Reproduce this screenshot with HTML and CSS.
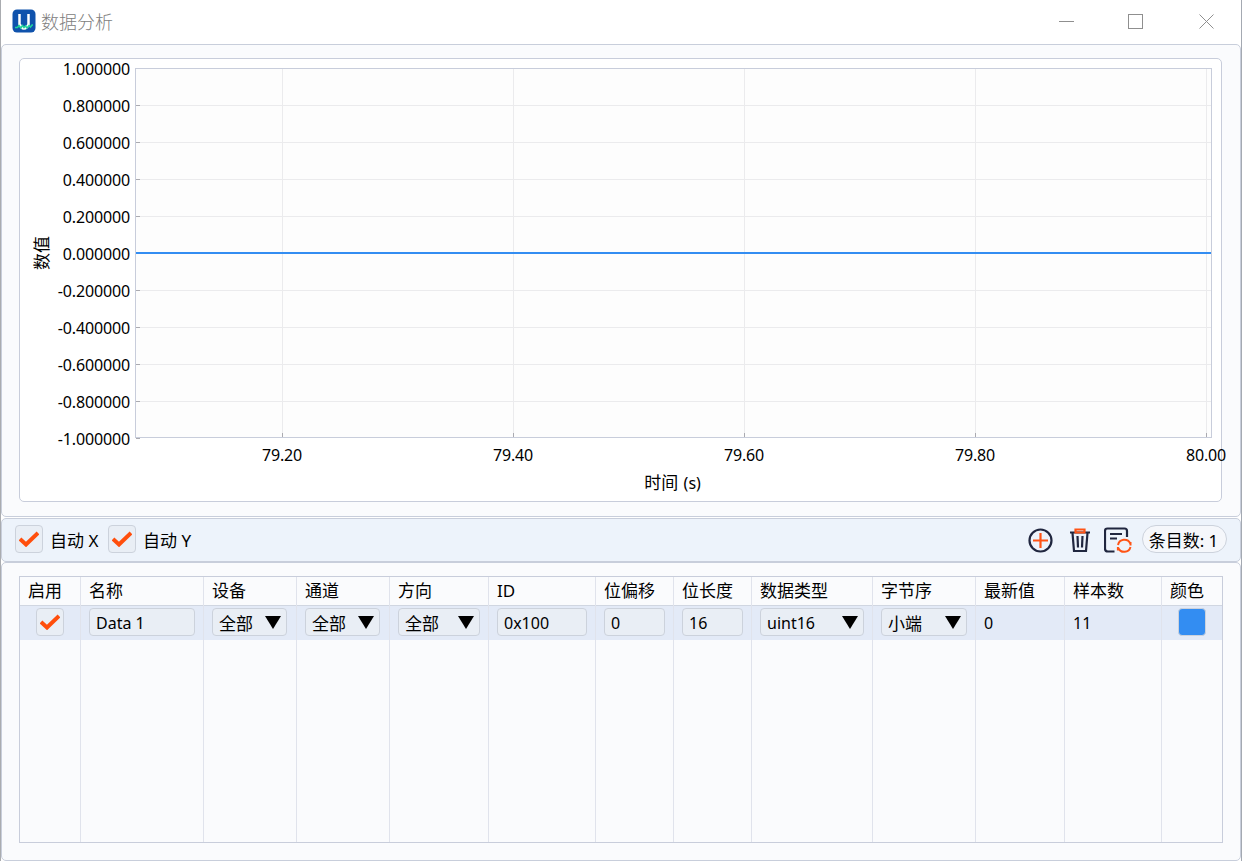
FILE: index.html
```
<!DOCTYPE html>
<html lang="zh-CN">
<head>
  <meta charset="UTF-8">
  <title>数据分析</title>
  <link rel="stylesheet" href="styles.css">
</head>
<body>
  <div class="window">
    <header class="titlebar">
      <svg class="logo" width="24" height="24" viewBox="0 0 24 24">
        <rect x="0.5" y="0.5" width="23" height="23" rx="4.5" fill="#0f52ac"/>
        <path d="M7.500 5v11M16.500 5v11M8 15.500q1 4 4 4t4.500-4" fill="none" stroke="#fff" stroke-width="2.500"/>
        <path d="M3 18.500h2.500l1.500-2 2 2.500 1.500-2.500 1.500 2 1.500-1.500 1.500 2 2-2.500 1.500 1.500 1.500-2h1" fill="none" stroke="#1fd49a" stroke-width="1.500"/>
      </svg>
      <h1>数据分析</h1>
      <svg class="controls" width="160" height="20" viewBox="1057 12 160 20" shape-rendering="crispEdges">
        <path d="M1059 21.5h15" />
        <rect x="1128.500" y="14.500" width="14" height="14"/>
        <path d="M1199.500 14.500l14 14M1213.500 14.500l-14 14" shape-rendering="auto"/>
      </svg>
    </header>

    <section class="panel chart-panel">
      <div class="chart">
        <svg id="plot" width="1201" height="442" viewBox="20 59 1201 442">
          <rect class="plot-bg" x="135.500" y="68.500" width="1076" height="369"/>
          <g id="grid"></g>
          <rect class="plot-frame" x="135.500" y="68.500" width="1076" height="369"/>
          <g id="ticks"></g>
          <path class="series" d="M136 253h1075"/>
          <g id="labels"></g>
          <text class="axis" x="672.500" y="488.500" text-anchor="middle">时间 <tspan class="unit" dx="1">(s)</tspan></text>
          <text class="axis" transform="translate(48 253) rotate(-90)" text-anchor="middle">数值</text>
        </svg>
      </div>
    </section>

    <section class="panel toolbar">
      <span class="check"><svg width="20" height="16" viewBox="0 0 20 16"><path d="M1 8l6 5.500L19 2"/></svg></span>
      <label>自动 X</label>
      <span class="check"><svg width="20" height="16" viewBox="0 0 20 16"><path d="M1 8l6 5.500L19 2"/></svg></span>
      <label>自动 Y</label>
      <div class="actions">
        <svg width="26" height="26" viewBox="0 0 26 26">
          <circle class="dark" cx="12.500" cy="13.500" r="11"/>
          <path class="accent" d="M12.500 6v15M5 13.500h15"/>
        </svg>
        <svg width="22" height="26" viewBox="0 0 22 26">
          <path class="dark" d="M1 5.500h20M3.500 6l1.500 18h12L18.500 6M8.500 9l.5 11.500M13.500 9l-.5 11.500"/>
          <path class="accent" d="M5.500 5.500h11M6.500 5V2.500h9V5"/>
        </svg>
        <svg width="28" height="26" viewBox="0 0 28 26">
          <path class="dark" d="M10.500 24.500H4q-3 0-3-3V4q0-2.500 2.500-2.500h17Q23 1.500 23 4v6M6 7h12M6 11.500h7"/>
          <path class="accent thin" d="M14 18a6.500 6.500 0 0 1 12.300-1.500M14.300 21a6.500 6.500 0 0 0 12.200-1M26.500 15v3.500M13.900 23.500V20"/>
        </svg>
        <span class="count">条目数: 1</span>
      </div>
    </section>

    <section class="panel table-panel">
      <div class="table">
        <div class="col"><div class="th">启用</div><div class="td center"><span class="check"><svg width="20" height="16" viewBox="0 0 20 16"><path d="M1 8l6 5.500L19 2"/></svg></span></div></div>
        <div class="col"><div class="th">名称</div><div class="td"><span class="field">Data 1</span></div></div>
        <div class="col"><div class="th">设备</div><div class="td"><span class="field select zh">全部</span></div></div>
        <div class="col"><div class="th">通道</div><div class="td"><span class="field select zh">全部</span></div></div>
        <div class="col"><div class="th">方向</div><div class="td"><span class="field select zh">全部</span></div></div>
        <div class="col"><div class="th">ID</div><div class="td"><span class="field">0x100</span></div></div>
        <div class="col"><div class="th">位偏移</div><div class="td"><span class="field">0</span></div></div>
        <div class="col"><div class="th">位长度</div><div class="td"><span class="field">16</span></div></div>
        <div class="col"><div class="th">数据类型</div><div class="td"><span class="field select">uint16</span></div></div>
        <div class="col"><div class="th">字节序</div><div class="td"><span class="field select zh">小端</span></div></div>
        <div class="col"><div class="th">最新值</div><div class="td"><span class="value">0</span></div></div>
        <div class="col"><div class="th">样本数</div><div class="td"><span class="value">11</span></div></div>
        <div class="col"><div class="th">颜色</div><div class="td center"><span class="swatch"></span></div></div>
      </div>
    </section>
  </div>

  <script>
    const grid = document.getElementById('grid');
    const ticks = document.getElementById('ticks');
    const labels = document.getElementById('labels');
    let lines = '', marks = '', texts = '';

    // Y: 1.0 .. -1.0
    for (let i = 0; i <= 10; i++) {
      const y = 68.5 + i * 37;
      if (i > 0 && i < 10) lines += `<path d="M136 ${y}h1075"/>`;
      if (i > 0) marks += `<path d="M136 ${y}h4"/>`;
      texts += `<text x="130" y="${y + 6.5}" text-anchor="end">${((5 - i) / 5).toFixed(6)}</text>`;
    }
    // X: 79.20 .. 80.00
    for (let i = 0; i < 5; i++) {
      const x = 282.5 + i * 231;
      lines += `<path d="M${x} 69v368"/>`;
      marks += `<path d="M${x} 433v4"/>`;
      texts += `<text x="${x - 0.5}" y="461" text-anchor="middle">${(79.2 + i * 0.2).toFixed(2)}</text>`;
    }
    grid.innerHTML = lines;
    ticks.innerHTML = marks;
    labels.innerHTML = texts;
  </script>
</body>
</html>
```
FILE: styles.css
```
* {
  box-sizing: border-box;
}
body {
  margin: 0;
  font-family: "Noto Sans", "Noto Sans CJK SC", sans-serif;
  font-size: 16px;
  color: #000;
  background-color: #fff;
}
.window {
  height: 861px;
  display: flex;
  flex-direction: column;
  border-left: 1px solid #aaacb0;
  border-right: 1px solid #a4a9b2;
}
.titlebar {
  height: 44px;
  display: flex;
  align-items: center;
  padding: 0 24px 0 11px;
}
.titlebar h1 {
  margin: -2px 0 0 5px;
  font-family: "Noto Sans CJK SC", sans-serif;
  font-size: 18px;
  font-weight: 300;
  line-height: 24px;
  color: #808080;
}
.logo {
  margin-top: -2px;
}
.controls {
  margin-left: auto;
  fill: none;
  stroke: #8f8f8f;
}
.panel {
  border: 1px solid #c8cedb;
  border-radius: 5px;
  background-color: #fafbfd;
}
.chart-panel {
  height: 473px;
  padding: 13px 17px;
}
.chart {
  width: 1203px;
  height: 444px;
  border: 1px solid #c8cddb;
  border-radius: 5px;
  background-color: #fff;
}
#plot {
  display: block;
  overflow: visible;
}
#plot text {
  font-size: 16px;
  letter-spacing: -0.15px;
}
#plot .axis {
  font-size: 17px;
  letter-spacing: 0;
}
.unit {
  font-size: 16px;
}
.plot-bg {
  fill: #fdfdfd;
}
.plot-frame {
  fill: none;
  stroke: #c8cddb;
}
#grid path {
  stroke: #ebebed;
}
#ticks path {
  stroke: #aaaab0;
}
.series {
  stroke: #338df2;
  stroke-width: 2;
}
.toolbar {
  height: 44px;
  margin-top: 1px;
  padding: 0 13px 2px;
  display: flex;
  align-items: center;
  background-color: #edf3fb;
}
.toolbar label {
  margin: 0 9px 0 7px;
  font-size: 17px;
  min-width: 49px;
}
.check {
  width: 28px;
  height: 28px;
  flex: none;
  display: flex;
  align-items: center;
  justify-content: center;
  border: 1px solid #ccd2dc;
  border-radius: 4px;
  background-color: #e9eef5;
}
.check path {
  fill: none;
  stroke: #ff4e0c;
  stroke-width: 4;
}
.actions {
  margin-left: auto;
  display: flex;
  align-items: center;
}
.actions svg {
  margin-top: 2px;
  margin-right: 14px;
  fill: none;
  stroke-width: 2.2;
}
.actions svg:nth-of-type(1) {
  margin-right: 15px;
}
.actions svg:nth-of-type(2) {
  margin-right: 13px;
}
.actions svg:nth-of-type(3) {
  margin-right: 10px;
}
.dark {
  stroke: #20263f;
}
.accent {
  stroke: #ff5416;
}
.thin {
  stroke-width: 2;
}
.count {
  width: 85px;
  height: 28px;
  padding-right: 2px;
  border: 1px solid #ccd2dc;
  border-radius: 14px;
  background-color: #f5f7fb;
  font-size: 17px;
  line-height: 29px;
  text-align: center;
  white-space: nowrap;
}
.table-panel {
  height: 299px;
  padding: 13px 17px;
}
.table {
  width: 1204px;
  height: 267px;
  display: grid;
  grid-template-columns: 61px 123px 93px 93px 99px 107px 78px 78px 121px 103px 89px 97px 60px;
  border: 1px solid #c8cddb;
}
.col {
  border-right: 1px solid #e0e3ec;
}
.col:last-child {
  border-right: none;
}
.th {
  height: 29px;
  padding-left: 8px;
  border-bottom: 1px solid #d0d6e1;
  font-size: 17px;
  line-height: 28px;
  white-space: nowrap;
}
.td {
  height: 34px;
  padding: 2px 8px 0;
  background-color: #e3eaf7;
}
.center {
  display: flex;
  justify-content: center;
}
.field {
  height: 28px;
  padding: 2px 6px 0;
  display: flex;
  align-items: center;
  justify-content: space-between;
  border: 1px solid #ccd2dc;
  border-radius: 4px;
  background-color: #e9eef5;
}
.select::after {
  content: "";
  margin: -2px -1px 0 0;
  border: 8px solid transparent;
  border-top: 13px solid #000;
  border-bottom: none;
}
.zh {
  padding-top: 0;
  font-size: 17px;
}
.zh::after {
  margin-top: 0;
}
.col:nth-child(3) .field,
.col:nth-child(4) .field {
  width: 75px;
}
.value {
  line-height: 31px;
}
.swatch {
  width: 28px;
  height: 28px;
  border: 1px solid #ccd2dc;
  border-radius: 4px;
  background-color: #338df2;
}
```
